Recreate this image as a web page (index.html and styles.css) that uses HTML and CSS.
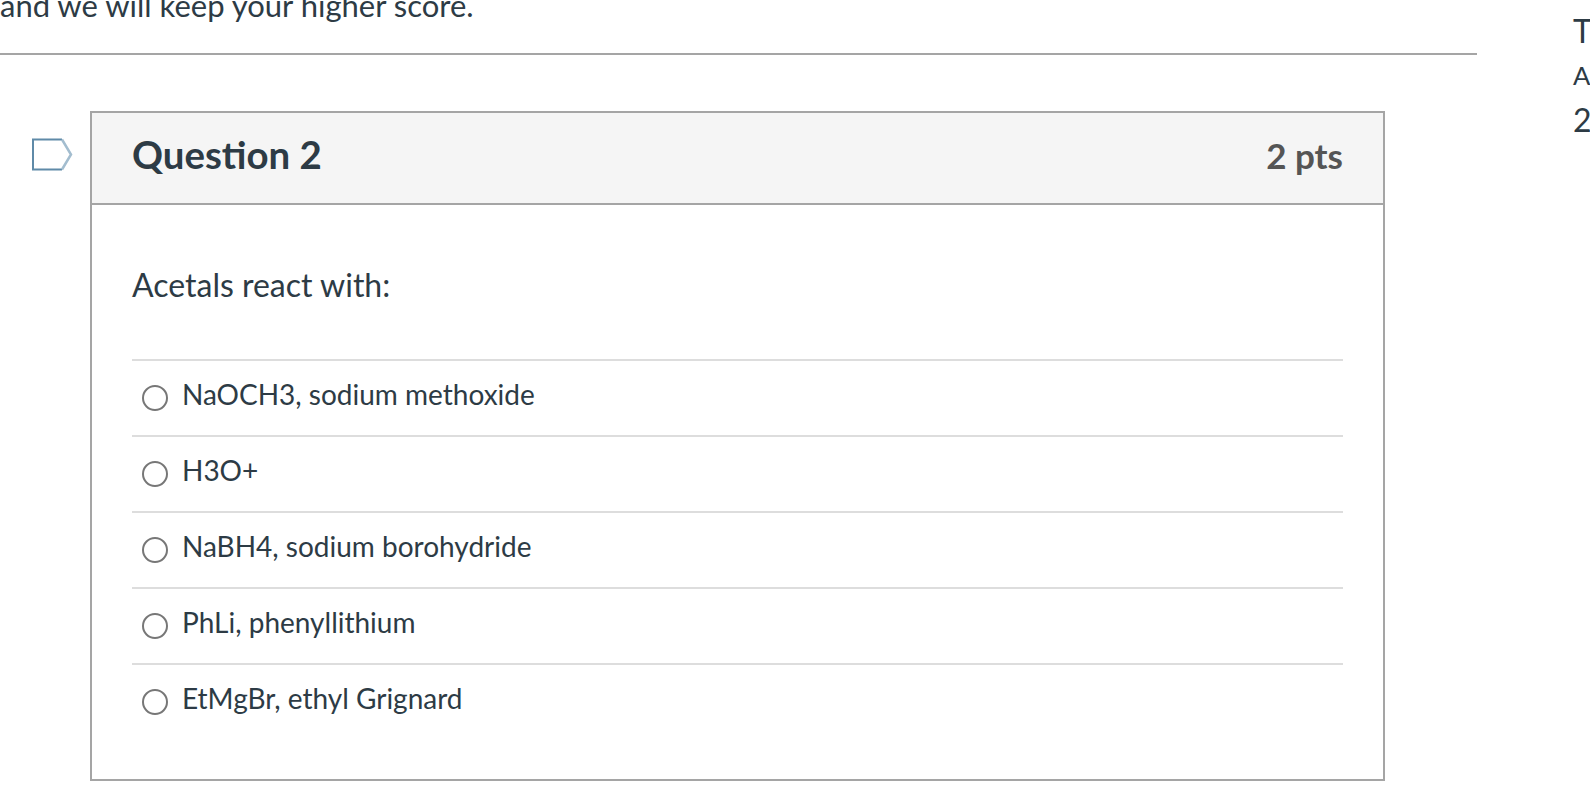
FILE: index.html
```html
<!DOCTYPE html>
<html lang="en">
<head>
    <meta charset="UTF-8">
    <meta name="viewport" content="width=device-width, initial-scale=1.0">
    <title>Quiz</title>
    <link rel="stylesheet" href="styles.css">
</head>
<body>
    <div class="page">
        <main class="quiz">
            <p class="intro">and we will keep your higher score.</p>
            <hr class="rule">

            <div class="question-row">
                <svg class="flag" width="41" height="33" viewBox="0 0 41 33">
                    <path d="M30 1.500H1V31.500H30" fill="none" stroke="#5f8aa8" stroke-width="2"/>
                    <path d="M30 1.500L39 16.500L30 31.500" fill="none" stroke="#a3bdcf" stroke-width="2.500"/>
                </svg>
                <section class="question">
                    <header class="question-header">
                        <h2>Question 2</h2>
                        <span class="points">2 pts</span>
                    </header>
                    <div class="question-body">
                        <p class="question-text">Acetals react with:</p>
                        <ul class="answers">
                            <li><span class="radio"></span>NaOCH3, sodium methoxide</li>
                            <li><span class="radio"></span>H3O+</li>
                            <li><span class="radio"></span>NaBH4, sodium borohydride</li>
                            <li><span class="radio"></span>PhLi, phenyllithium</li>
                            <li><span class="radio"></span>EtMgBr, ethyl Grignard</li>
                        </ul>
                    </div>
                </section>
            </div>
        </main>

        <aside class="sidebar">
            <div class="side-title">T</div>
            <div class="side-small">A</div>
            <div class="side-title">2</div>
        </aside>
    </div>
</body>
</html>
```

FILE: styles.css
```css
html, body {
    margin: 0;
    padding: 0;
    height: 100%;
    overflow: hidden;
}
body {
    font-family: Lato, "Open Sans", sans-serif;
    color: #2d3b45;
    background-color: #fff;
}
.page {
    display: flex;
    height: 792px;
    overflow: hidden;
}
.quiz {
    width: 1477px;
    flex-shrink: 0;
}
.intro {
    margin: -17px 0 0;
    font-size: 31px;
    line-height: 44px;
}
.rule {
    margin: 26px 0 0;
    border: 0;
    height: 2px;
    background-color: #a5a5a5;
}
.question-row {
    display: flex;
    align-items: flex-start;
    margin-top: 56px;
}
.flag {
    margin: 27px 17px 0 32px;
}
.question {
    width: 1295px;
    height: 670px;
    box-sizing: border-box;
    border: 2px solid #a5a5a5;
}
.question-header {
    display: flex;
    justify-content: space-between;
    align-items: center;
    height: 82px;
    padding: 0 40px 8px;
    background-color: #f5f5f5;
    border-bottom: 2px solid #a5a5a5;
}
.question-header h2 {
    margin: 0;
    font-size: 38.400px;
    font-weight: 700;
}
.points {
    font-size: 35px;
    font-weight: 700;
    color: #555;
    margin-top: 2px;
}
.question-body {
    padding: 0 40px;
}
.question-text {
    margin: 0;
    padding-top: 58px;
    font-size: 32px;
    line-height: 44px;
}
.answers {
    list-style: none;
    margin: 52px 0 0;
    padding: 0;
}
.answers li {
    display: flex;
    align-items: center;
    height: 66px;
    padding-bottom: 8px;
    border-top: 2px solid #ddd;
    font-size: 28px;
}
.radio {
    width: 22px;
    height: 22px;
    border: 2px solid #777;
    border-radius: 50%;
    margin: 7px 14px 0 10px;
    background-color: #fff;
}
.sidebar {
    margin-left: 96px;
    padding-top: 9px;
    white-space: nowrap;
}
.side-title {
    font-size: 32px;
    line-height: 44px;
}
.side-small {
    font-size: 25.600px;
    line-height: 45px;
}
```
